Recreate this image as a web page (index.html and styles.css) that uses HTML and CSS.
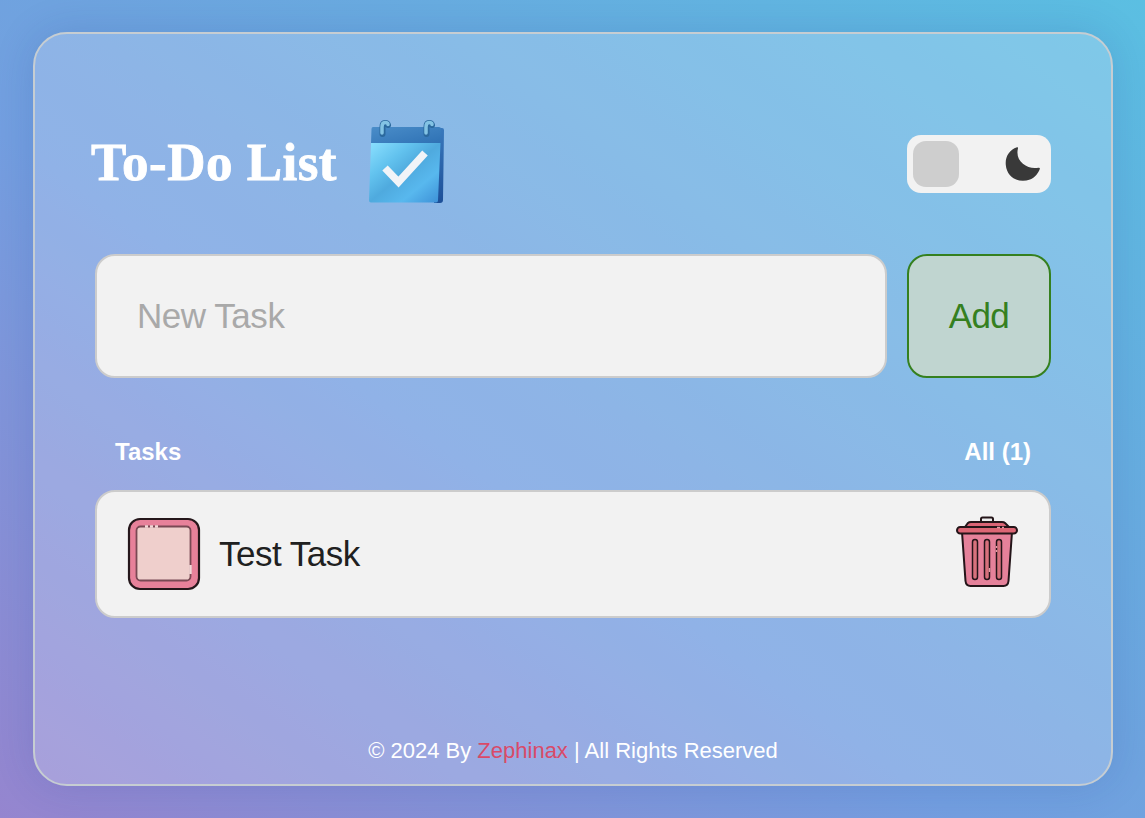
FILE: index.html
```
<!DOCTYPE html>
<html lang="en">
<head>
<meta charset="utf-8">
<title>To-Do List</title>
<link rel="stylesheet" href="styles.css">
</head>
<body>
<main class="card">
  <header class="header">
    <h1 class="title">To-Do List</h1>
    <svg class="logo" viewBox="0 0 80 88">
      <defs>
        <linearGradient id="page" x1="0" y1="0" x2="1" y2="1"><stop offset="0" stop-color="#8be0ff"/><stop offset=".3" stop-color="#62c2ee"/><stop offset=".5" stop-color="#4faade"/><stop offset=".72" stop-color="#58b8ee"/><stop offset="1" stop-color="#3c8fd6"/></linearGradient>
        <linearGradient id="band" x1="0" y1="0" x2="1" y2="1"><stop offset="0" stop-color="#4a8dc9"/><stop offset="1" stop-color="#2e71b4"/></linearGradient>
        <linearGradient id="side" x1="0" y1="0" x2="0" y2="1"><stop offset="0" stop-color="#3979bd"/><stop offset="1" stop-color="#1c4f98"/></linearGradient>
      </defs>
      <path d="M70 8h4q2 0 2 2l-1 70q0 3-3 3h-6z" fill="url(#side)"/>
      <path d="M5 7h66q2 0 2 2l-1 15H3L3.500 9Q3.500 7 5 7z" fill="url(#band)"/>
      <path d="M3 23h69.500L70 80.500q0 2-2 2H3q-2 0-2-2z" fill="url(#page)"/>
      <path d="M14.500 14V7q0-4 2.500-4t3 2M58.500 14V7q0-4 2.500-4t3 2" fill="none" stroke="#2b699e" stroke-width="6" stroke-linecap="round"/>
      <path d="M14 13V7q0-4.500 3-4.500t3 2M58 13V7q0-4.500 3-4.500t3 2" fill="none" stroke="#83c3e4" stroke-width="3.500" stroke-linecap="round"/>
      <path d="M17 48l13.500 14L57 33" fill="none" stroke="#f1f4f8" stroke-width="7.500"/>
    </svg>
    <div class="switch">
      <span class="knob"></span>
      <svg class="moon" viewBox="0 0 36 36"><path d="M12 1.200C4 4 0 11 .8 19 2 32 14 37.500 25 33.500c5-2 8-6 9.800-10.500q.4-1.600-1.300-1.300C23 24 9.500 16 13 2.300q.3-1.400-1-1.100z" fill="#393939"/></svg>
    </div>
  </header>
  <form class="entry">
    <input class="field" type="text" placeholder="New Task" aria-label="New Task">
    <button class="add" type="button">Add</button>
  </form>
  <div class="summary"><span>Tasks</span><span class="count">All (1)</span></div>
  <div class="task">
    <svg class="check" viewBox="0 0 74 74">
      <rect x="2" y="2" width="70" height="70" rx="11" fill="#e7819a" stroke="#25171b" stroke-width="2.200"/>
      <rect x="9.500" y="9.500" width="54" height="54" rx="4" fill="#efcfcc" stroke="#794954" stroke-width="1.800"/>
      <path d="M18 9.500h3m2 0h3m2 0h3M63.500 48v9" stroke="#f3d8d8" stroke-width="2.500"/>
    </svg>
    <span class="name">Test Task</span>
    <svg class="bin" viewBox="0 0 64 72" stroke="#241519" stroke-width="2">
      <path d="M26 7V3q0-1.500 1.500-1.500h9Q38 1.500 38 3v4" fill="#eee"/>
      <path d="M7 16h50l-3.500 49q-.5 5-5 5h-33q-4.500 0-5-5z" fill="#e5819a"/>
      <path d="M10 11l3-4q1-1 3-1h31q2 0 3 1l4 4z" fill="#db6576"/>
      <rect x="2" y="11" width="60" height="6.500" rx="3.250" fill="#dc6675"/>
      <g fill="#d7717c" stroke-width="1.500"><rect x="17.500" y="23.500" width="5" height="40" rx="2.500"/><rect x="29.500" y="23.500" width="5" height="40" rx="2.500"/><rect x="41.500" y="23.500" width="5" height="40" rx="2.500"/></g>
      <path d="M42 11.500h3m2 0h2M34.500 52v4M41.500 30v2m0 2v2" stroke="#e49ba6" stroke-width="1.500"/>
    </svg>
  </div>
  <footer class="footer">© 2024 By <a class="author">Zephinax</a> | All Rights Reserved</footer>
</main>
</body>
</html>
```
FILE: styles.css
```
* { box-sizing: border-box; }
body {
  margin: 0;
  height: 818px;
  padding: 32px 32px 32px 33px;
  overflow: hidden;
  font-family: "Liberation Sans", Arial, sans-serif;
  background: linear-gradient(to top right, #9585cf 0%, #739fe0 42%, #6fa3df 52%, #5bbfe2 100%);
}
.card {
  display: flex;
  flex-direction: column;
  height: 754px;
  padding: 86px 60px 20px;
  border: 2px solid #c6cdd2;
  border-radius: 34px;
  background: rgba(242, 242, 255, .23);
  box-shadow: 0 0 40px rgba(30, 50, 140, .15);
}
.header { display: flex; align-items: center; height: 88px; }
.title {
  width: 272px;
  margin: -4px 0 0 -4px;
  color: #fff;
  font: bold 53px/60px "Liberation Serif", serif;
  letter-spacing: .5px;
  -webkit-text-stroke: .8px #fff;
  white-space: nowrap;
}
.logo { width: 80px; height: 88px; margin-left: 5px; }
.switch {
  display: flex;
  align-items: center;
  justify-content: space-between;
  width: 144px;
  height: 58px;
  margin-left: auto;
  padding: 0 10px 0 6px;
  border-radius: 14px;
  background: #f2f2f2;
}
.knob { width: 46px; height: 46px; border-radius: 13px; background: #cecece; }
.moon { width: 36px; height: 36px; }
.entry { display: flex; gap: 20px; height: 124px; margin-top: 46px; }
.field {
  flex: 1;
  min-width: 0;
  padding: 0 40px;
  border: 2px solid #ccc;
  border-radius: 20px;
  background: #f2f2f2;
  font: 35px "Liberation Sans", Arial, sans-serif;
  letter-spacing: -.45px;
}
.field::placeholder { color: #a9a9a9; opacity: 1; }
.add {
  width: 144px;
  padding: 0;
  border: 2px solid #35801f;
  border-radius: 20px;
  background: #c0d5d0;
  color: #35801f;
  font: 35px "Liberation Sans", Arial, sans-serif;
  letter-spacing: -.6px;
}
.summary {
  display: flex;
  justify-content: space-between;
  margin-top: 60px;
  padding: 0 20px;
  color: #fff;
  font-size: 24px;
  font-weight: bold;
  line-height: 28px;
}
.task {
  display: flex;
  align-items: center;
  height: 128px;
  margin-top: 24px;
  padding: 0 30px;
  border: 2px solid #ccc;
  border-radius: 20px;
  background: #f2f2f2;
}
.check { width: 74px; height: 74px; }
.name { margin-left: 18px; color: #202020; font-size: 35px; letter-spacing: -.5px; }
.bin { width: 64px; height: 72px; margin: -4px 0 0 auto; }
.footer {
  margin-top: auto;
  color: #fff;
  font-size: 22px;
  line-height: 26px;
  text-align: center;
}
.author { color: #d94a68; }
```
